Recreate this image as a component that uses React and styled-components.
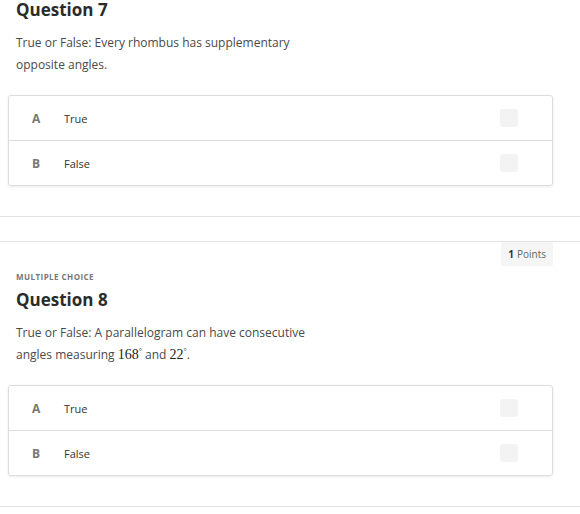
import styled, { createGlobalStyle } from 'styled-components';

const GlobalStyle = createGlobalStyle`
	body {
		margin: 0;
		background: #fff;
		font-family: 'Open Sans', 'Liberation Sans', sans-serif;
		color: #333;
	}
`;

const Page = styled.div`
	width: 580px;
	height: 514px;
	overflow: hidden;
`;

// the screenshot is scrolled part way into question 7
const Scroller = styled.div`
	margin-top: -49px;
`;

const Section = styled.section`
	border-top: 1px solid #e2e2e2;
	border-bottom: 1px solid #e2e2e2;
	padding: 0 27px 30px 8px;
	margin-bottom: 24px;
`;

const Header = styled.div`
	display: flex;
	justify-content: flex-end;
`;

const Badge = styled.div`
	height: 24px;
	padding: 0 7px;
	display: flex;
	align-items: center;
	gap: 3px;
	background: #f5f5f5;
	border-radius: 2px;
	font-size: 10px;
	color: #666;

	b {
		color: #333;
		font-weight: 700;
	}
`;

const Kind = styled.div`
	margin: 5px 0 0 8px;
	font-size: 8px;
	line-height: 12px;
	font-weight: 700;
	letter-spacing: 0.45px;
	color: #777;
	text-transform: uppercase;
`;

const Title = styled.h2`
	margin: 5px 0 0 8px;
	font-size: 17px;
	line-height: 24px;
	font-weight: 700;
	color: #2b2b2b;
`;

const Prompt = styled.p`
	margin: 10px 0 0 8px;
	width: 300px;
	font-size: 12px;
	line-height: 22px;
	color: #4a4a4a;
`;

const Math = styled.span`
	font-family: 'Liberation Serif', 'Times New Roman', serif;
	font-size: 14px;
	line-height: 0;
	color: #222;

	sup {
		font-size: 8px;
		line-height: 0;
		vertical-align: 5px;
	}
`;

const Choices = styled.ul`
	list-style: none;
	margin: 19px 0 0;
	padding: 0;
	border: 1px solid #ddd;
	border-radius: 3px;
	box-shadow: 0 1px 3px rgba(0, 0, 0, 0.08);
`;

const Choice = styled.li`
	height: 44px;
	display: flex;
	align-items: center;
	padding: 0 34px 0 23px;
	& + & {
		border-top: 1px solid #ddd;
	}
`;

const Letter = styled.span`
	width: 32px;
	font-size: 12px;
	font-weight: 700;
	color: #777;
`;

const Label = styled.span`
	flex: 1;
	font-size: 11px;
	color: #333;
`;

const Box = styled.span`
	width: 18px;
	height: 18px;
	border-radius: 3px;
	background: #f3f3f3;
`;

const questions = [
	{
		num: 7,
		prompt: 'True or False: Every rhombus has supplementary opposite angles.',
	},
	{
		num: 8,
		prompt: (
			<>
				True or False: A parallelogram can have consecutive angles measuring{' '}
				<Math>
					168<sup>°</sup>
				</Math>{' '}
				and{' '}
				<Math>
					22<sup>°</sup>
				</Math>
				.
			</>
		),
	},
];

const App = () => {
	return (
		<Page>
			<GlobalStyle />
			<Scroller>
				{questions.map((q) => (
					<Section key={q.num}>
						<Header>
							<Badge>
								<b>1</b> Points
							</Badge>
						</Header>
						<Kind>Multiple Choice</Kind>
						<Title>Question {q.num}</Title>
						<Prompt>{q.prompt}</Prompt>
						<Choices>
							<Choice>
								<Letter>A</Letter>
								<Label>True</Label>
								<Box />
							</Choice>
							<Choice>
								<Letter>B</Letter>
								<Label>False</Label>
								<Box />
							</Choice>
						</Choices>
					</Section>
				))}
			</Scroller>
		</Page>
	);
};

export default App;
